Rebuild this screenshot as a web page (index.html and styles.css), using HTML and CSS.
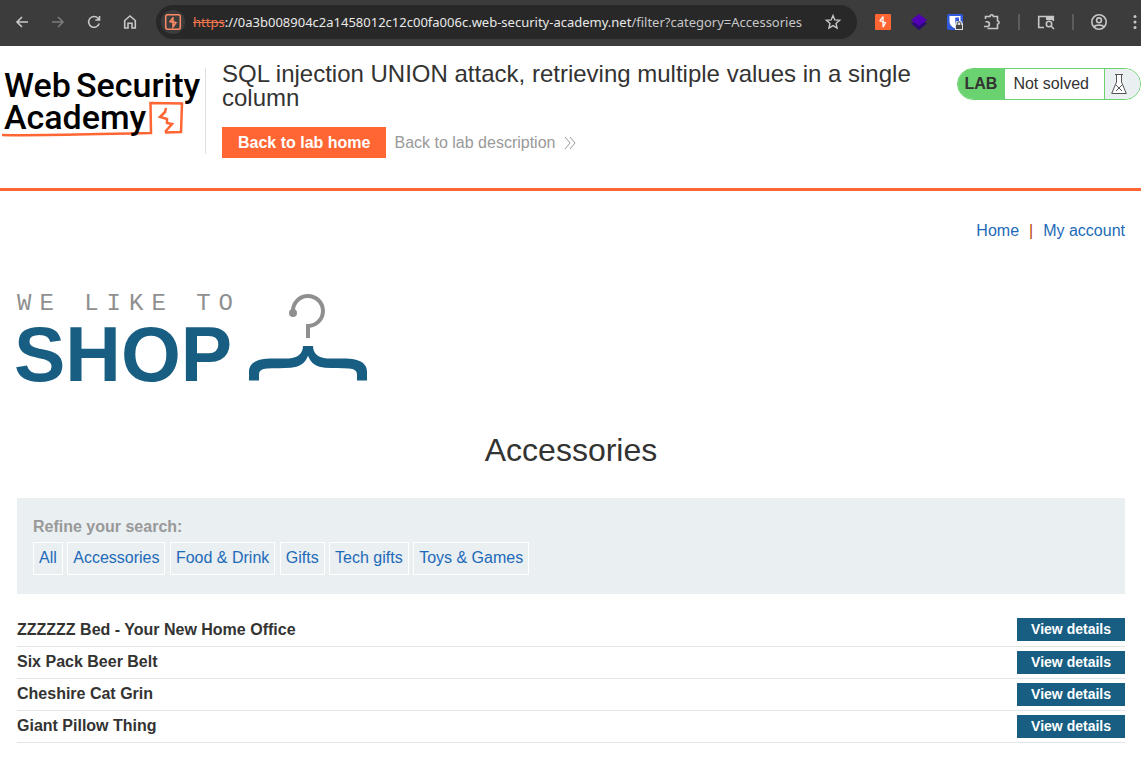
FILE: index.html
```html
<!DOCTYPE html>
<html lang="en">
<head>
    <meta charset="UTF-8">
    <meta name="viewport" content="width=device-width, initial-scale=1.0">
    <title>SQL injection UNION attack, retrieving multiple values in a single column</title>
    <link rel="stylesheet" href="styles.css">
</head>
<body>
    <div class="browser-bar">
        <div class="browser-nav">
            <button type="button" class="icon-btn" aria-label="Back">
                <svg width="16" height="16" viewBox="0 0 16 16"><path d="M14 8H3M8 3L3 8l5 5"/></svg>
            </button>
            <button type="button" class="icon-btn icon-btn-dim" aria-label="Forward">
                <svg width="16" height="16" viewBox="0 0 16 16"><path d="M2 8h11M8 3l5 5-5 5"/></svg>
            </button>
            <button type="button" class="icon-btn" aria-label="Reload">
                <svg width="16" height="16" viewBox="0 0 16 16"><path d="M13.2 9.5A5.4 5.4 0 1 1 12 4.2l1.4 1.6M13.5 2v4H9.3"/></svg>
            </button>
            <button type="button" class="icon-btn" aria-label="Home">
                <svg width="16" height="16" viewBox="0 0 16 16"><path d="M2.7 14V6.5L8 2l5.3 4.5V14H10V9.2H6V14z"/></svg>
            </button>
        </div>

        <div class="address-bar">
            <span class="site-icon">
                <svg width="18" height="18" viewBox="0 0 18 18"><rect x="1.7" y="1.7" width="14.6" height="14.6" rx="2"/><path d="M9.4 4.2L6 8.6l3.2.9V9M9 5.5v3.1l3 1-3 4.2V9.500"/></svg>
            </span>
            <div class="url" role="textbox" aria-label="Address" contenteditable="true" spellcheck="false"><span class="url-scheme">https</span>://0a3b008904c2a1458012c12c00fa006c.web-security-academy.net<span class="url-path">/filter?category=Accessories</span></div>
            <button type="button" class="icon-btn star" aria-label="Bookmark">
                <svg width="16" height="16" viewBox="0 0 16 16"><path d="M8 1.5l1.8 4.4 4.8.4-3.6 3.1 1.1 4.7L8 11.6l-4.1 2.5L5 9.4 1.4 6.3l4.8-.4z"/></svg>
            </button>
        </div>

        <div class="extensions">
            <button type="button" class="icon-btn" aria-label="Burp Suite">
                <svg width="16" height="16" viewBox="0 0 16 16"><rect class="burp-bg" width="16" height="16" rx="1"/><path class="burp-bolt" d="M8 2.5L5 6.8l5.500 2L8 13.200M8 2.500v5M8 8.500v4.500"/></svg>
            </button>
            <button type="button" class="icon-btn" aria-label="Layers">
                <svg width="16" height="16" viewBox="0 0 16 16"><path class="layer-low" d="M0 9.5L8 5l8 4.5L8 16z"/><path class="layer-top" d="M0 6L8 0l8 6-8 6z"/></svg>
            </button>
            <button type="button" class="icon-btn" aria-label="Bitwarden">
                <svg width="16" height="16" viewBox="0 0 16 16"><rect class="bw-bg" width="16" height="16" rx="2"/><path class="bw-shield" d="M2.5 2h11v6c0 3-2.5 5-5.5 6.5C5 13 2.5 11 2.5 8z"/><path class="bw-half" d="M8.3 3.6H12V8c0 2-1.7 3.2-3.7 4.5z"/><path class="bw-lock-bg" d="M8 10l1.500-3h5L16 10v6H8z"/><path class="bw-lock" d="M9 11h6v4H9z"/><path class="bw-shackle" d="M10.300 11V9.500a1.700 1.700 0 0 1 3.400 0V11"/></svg>
            </button>
            <button type="button" class="icon-btn" aria-label="Extensions">
                <svg width="18" height="18" viewBox="0 0 18 18"><path d="M2.5 6V3.5H7a1.600 1.600 0 0 1 3.400 0h4.100V8a1.600 1.600 0 0 1 0 3.200v4.300H4.500M1 13.500h3A2 2 0 0 0 4 8.800H2.500"/></svg>
            </button>
            <span class="bar-divider"></span>
            <button type="button" class="icon-btn" aria-label="Search tabs">
                <svg width="18" height="18" viewBox="0 0 18 18"><path d="M7 14.5H1.700V3.500h14.600V8"/><path class="solid" d="M9 3h7.500v4H9z"/><circle cx="12" cy="11" r="2.700"/><path d="M14 13l3 3"/></svg>
            </button>
            <span class="bar-divider"></span>
            <button type="button" class="icon-btn profile" aria-label="Profile">
                <svg width="16" height="16" viewBox="0 0 16 16"><circle cx="8" cy="8" r="7.200"/><circle cx="8" cy="6.300" r="2.400"/><path d="M3.300 13c1-2.500 8.400-2.500 9.400 0"/></svg>
            </button>
            <button type="button" class="icon-btn" aria-label="Menu">
                <svg width="4" height="16" viewBox="0 0 4 16"><g class="solid"><circle cx="2" cy="2.500" r="1.500"/><circle cx="2" cy="8" r="1.500"/><circle cx="2" cy="13.500" r="1.500"/></g></svg>
            </button>
        </div>
    </div>

    <header class="lab-header">
        <a href="#" class="academy-logo" aria-label="Web Security Academy">
            <svg width="202" height="86" viewBox="0 0 202 86">
                <path class="logo-line" d="M2 67c40 1 90-1 149-2l-.5-30 31.500.5-1 28.500-16 .5"/>
                <path class="logo-bolt" d="M166 40l-1 4-5 5 7 2v4l5 1-7 8"/>
                <g class="logo-text">
                    <text x="4" y="29">Web</text>
                    <text x="76" y="29">Security</text>
                    <text x="4" y="61">Academy</text>
                </g>
            </svg>
        </a>
        <div class="lab-title">
            <h2>SQL injection UNION attack, retrieving multiple values in a single column</h2>
            <div class="lab-links">
                <a href="#" class="btn-home">Back to lab home</a>
                <a href="#" class="link-back">Back to lab description
                    <svg width="12" height="12" viewBox="0 0 12 12"><path d="M1 0l5 6-5 6M6 0l5 6-5 6"/></svg>
                </a>
            </div>
        </div>
        <div class="lab-status">
            <span class="status-tag">LAB</span>
            <span class="status-text">Not solved</span>
            <span class="status-icon">
                <svg width="16" height="20" viewBox="0 0 16 20"><path d="M4 .5h8M5.5 1v7L.7 19.500h14.600L10.500 8V1M5 11l6 6M11 11l-6 6"/></svg>
            </span>
        </div>
    </header>

    <main class="shop">
        <nav class="top-links">
            <a href="#">Home</a>
            <span>|</span>
            <a href="#">My account</a>
        </nav>

        <div class="shop-logo">
            <svg width="352" height="100" viewBox="0 0 352 100">
                <text class="tagline" x="0" y="22">WE LIKE TO</text>
                <text class="shop-name" x="-3" y="93">SHOP</text>
                <circle class="hook-dot" cx="276" cy="25" r="4"/>
                <path class="hook" d="M276 24A15 15 0 1 1 291 38V50"/>
                <path class="hanger" d="M286 58h10c0 7 5 12 14 12.500 11 .5 19-1 28 1 9 2 12 7 12 12v9h-10v-6c0-4-3-5.500-8-6-8-.5-16 0-24-.7-8-.7-14-4-17-12-3 8-9 11.300-17 12-8 .7-16 .2-24 .7-5 .5-8 2-8 6v6h-10v-9c0-5 3-10 12-12 9-2 17-.5 28-1 9-.5 14-5.500 14-12.500z"/>
            </svg>
        </div>

        <h1>Accessories</h1>

        <section class="search-filters">
            <div class="filter-label">Refine your search:</div>
            <a href="#" class="filter">All</a>
            <a href="#" class="filter">Accessories</a>
            <a href="#" class="filter">Food &amp; Drink</a>
            <a href="#" class="filter">Gifts</a>
            <a href="#" class="filter">Tech gifts</a>
            <a href="#" class="filter">Toys &amp; Games</a>
        </section>

        <table class="products">
            <tbody>
                <tr>
                    <th scope="row">ZZZZZZ Bed - Your New Home Office</th>
                    <td><a href="#" class="btn-details">View details</a></td>
                </tr>
                <tr>
                    <th scope="row">Six Pack Beer Belt</th>
                    <td><a href="#" class="btn-details">View details</a></td>
                </tr>
                <tr>
                    <th scope="row">Cheshire Cat Grin</th>
                    <td><a href="#" class="btn-details">View details</a></td>
                </tr>
                <tr>
                    <th scope="row">Giant Pillow Thing</th>
                    <td><a href="#" class="btn-details">View details</a></td>
                </tr>
            </tbody>
        </table>
    </main>
</body>
</html>
```
FILE: styles.css
```css
* {
    margin: 0;
    padding: 0;
    box-sizing: border-box;
}

body {
    font-family: "Liberation Sans", Arial, sans-serif;
    font-size: 16px;
    color: #333332;
    background: #fff;
}

a {
    color: #1d6ab8;
    text-decoration: none;
}

svg {
    display: block;
    overflow: visible;
}

/* Browser toolbar */
.browser-bar {
    display: flex;
    align-items: center;
    height: 46px;
    padding: 0 4px 2px 14px;
    background: #3c3c3c;
}

.browser-nav {
    display: flex;
    gap: 20px;
    margin-right: 18px;
}

.icon-btn {
    flex: none;
    border: none;
    background: none;
    color: #c7c7c7;
    cursor: pointer;
}

.icon-btn svg {
    fill: none;
    stroke: currentColor;
    stroke-width: 1.6;
}

.icon-btn-dim {
    color: #7b7b7b;
}

.icon-btn .solid {
    fill: currentColor;
    stroke: none;
}

.address-bar {
    display: flex;
    flex: 1;
    align-items: center;
    min-width: 0;
    height: 34px;
    padding: 0 16px 0 5px;
    border-radius: 17px;
    background: #282828;
}

.site-icon {
    display: flex;
    align-items: center;
    justify-content: center;
    width: 24px;
    height: 24px;
    margin-right: 8px;
    border-radius: 12px;
    background: #3c3c3c;
}

.site-icon svg {
    fill: none;
    stroke: #ff8a65;
    stroke-width: 1.5;
}

.url {
    flex: 1;
    min-width: 0;
    overflow: hidden;
    white-space: nowrap;
    font-family: "Segoe UI", "Noto Sans", "Open Sans", sans-serif;
    font-size: 13px;
    color: #e8e8e8;
    outline: none;
}

.url-scheme {
    color: #f0764f;
    text-decoration: line-through;
}

.url-path {
    color: #c7c7c7;
}

.star svg {
    stroke-width: 1.4;
}

.extensions {
    display: flex;
    align-items: center;
    gap: 20px;
    margin-left: 18px;
}

.bar-divider {
    width: 2px;
    height: 16px;
    margin: 0 -3px;
    background: #5c5c5c;
}

.profile {
    margin-right: 6px;
}

.icon-btn .burp-bg {
    fill: #ff6633;
    stroke: none;
}

.icon-btn .burp-bolt {
    stroke: #fff;
    stroke-width: 1.3;
}

.icon-btn .layer-low {
    fill: #2b0a75;
    stroke: none;
}

.icon-btn .layer-top {
    fill: #5200b5;
    stroke: none;
}

.icon-btn .bw-bg,
.icon-btn .bw-half {
    fill: #3159dc;
    stroke: none;
}

.icon-btn .bw-shield {
    fill: #fff;
    stroke: none;
}

.icon-btn .bw-lock-bg {
    fill: #ddd;
    stroke: none;
}

.icon-btn .bw-lock {
    fill: #444;
    stroke: none;
}

.icon-btn .bw-shackle {
    stroke: #444;
    stroke-width: 1;
}

/* Lab header */
.lab-header {
    display: flex;
    align-items: flex-start;
    padding-top: 22px;
    padding-bottom: 30px;
    border-bottom: 3px solid #ff6633;
}

.academy-logo {
    flex: none;
    padding-right: 3px;
    border-right: 1px solid #e0e0e0;
}

.logo-text {
    font-family: Roboto, sans-serif;
    font-size: 34px;
    font-weight: 500;
    fill: #000;
}

.logo-line,
.logo-bolt {
    fill: none;
    stroke: #ff6633;
    stroke-width: 2.5;
}

.lab-title {
    flex: 1;
    padding: 0 32px 0 16px;
}

.lab-title h2 {
    margin-top: -6px;
    font-size: 24px;
    font-weight: normal;
    line-height: 24px;
}

.lab-links {
    display: flex;
    align-items: center;
    gap: 8px;
    margin-top: 17px;
}

.btn-home {
    padding: 0 16px;
    font-weight: bold;
    line-height: 31px;
    color: #fff;
    background: #ff6633;
}

.link-back {
    display: flex;
    align-items: center;
    gap: 9px;
    color: #999;
}

.link-back svg {
    fill: none;
    stroke: #999;
    stroke-width: 1;
}

.lab-status {
    display: flex;
    flex: none;
    height: 32px;
    overflow: hidden;
    border: 1px solid #6ad26f;
    border-radius: 16px;
    line-height: 30px;
}

.status-tag {
    padding: 0 8px 0 7px;
    font-weight: bold;
    background: #6ad26f;
}

.status-text {
    padding: 0 15px 0 8px;
}

.status-icon {
    display: flex;
    align-items: center;
    width: 36px;
    padding-left: 6px;
    border-left: 1px solid #6ad26f;
    background: #eaeff2;
}

.status-icon svg {
    fill: #fff;
    stroke: #555;
    stroke-width: 1;
}

/* Shop page */
.shop {
    padding: 30px 16px 24px 17px;
}

.top-links {
    display: flex;
    justify-content: flex-end;
    gap: 10px;
    line-height: 20px;
}

.top-links span {
    color: #b34700;
}

.shop-logo {
    margin-top: 47px;
}

.tagline {
    font-family: "Courier New", "Liberation Mono", monospace;
    font-size: 24px;
    letter-spacing: 8px;
    fill: #8f8f8f;
}

.shop-name {
    font-size: 77px;
    font-weight: bold;
    fill: #185e83;
}

.hook {
    fill: none;
    stroke: #8f8f8f;
    stroke-width: 4;
}

.hook-dot {
    fill: #8f8f8f;
}

.hanger {
    fill: #185e83;
}

.shop h1 {
    margin: 44px 0 30px;
    font-size: 32px;
    font-weight: normal;
    line-height: 36px;
    text-align: center;
}

.search-filters {
    padding: 19px 16px;
    background: #eaeff2;
}

.filter-label {
    margin-bottom: 6px;
    font-weight: bold;
    line-height: 19px;
    color: #999;
}

.filter {
    display: inline-block;
    padding: 0 5px 2px;
    border: 1px solid #fff;
    line-height: 29px;
}

.products {
    width: 100%;
    margin-top: 20px;
    border-collapse: collapse;
}

.products tr {
    border-bottom: 1px solid #e4e4e4;
}

.products th {
    height: 32px;
    text-align: left;
    font-weight: bold;
}

.products td {
    text-align: right;
}

.btn-details {
    display: inline-block;
    padding: 0 14px;
    font-size: 14px;
    font-weight: bold;
    line-height: 23px;
    vertical-align: middle;
    color: #fff;
    background: #185e83;
}
```
